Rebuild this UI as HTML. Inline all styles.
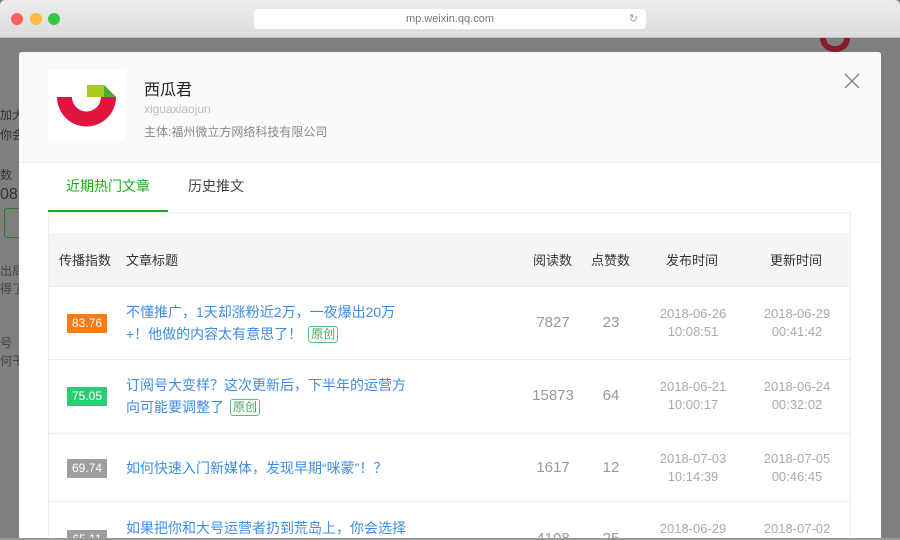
<!DOCTYPE html><html><head><meta charset="utf-8"><style>
*{margin:0;padding:0;box-sizing:border-box}
html{width:900px;height:540px;overflow:hidden}
body{width:900px;height:540px;overflow:hidden;background:#7f7f7f;font-family:"Liberation Sans","Noto Sans CJK SC",sans-serif;position:relative}
.chrome{position:absolute;left:0;top:0;width:900px;height:38px;background:linear-gradient(#ededed,#dcdcdc);border-bottom:1px solid #bdbdbd;border-radius:5px 5px 0 0}
.dot{position:absolute;top:13px;width:12px;height:12px;border-radius:50%}
.url{position:absolute;left:254px;top:9px;width:392px;height:20px;background:#fff;border-radius:4px;font-size:11px;color:#777;text-align:center;line-height:20px}
.modal{position:absolute;left:19px;top:52px;width:862px;height:486px;background:#fff;border-radius:3px 3px 0 0;overflow:hidden}
.head{height:111px;background:#fafafa;border-bottom:1px solid #eee;position:relative}
.abs{position:absolute}
.tabs{position:absolute;top:111px;left:0;width:862px;height:49px}
.table{position:absolute;left:29px;top:160px;width:803px;height:326px;border:1px solid #eee;border-bottom:none;overflow:hidden}
.th{position:absolute;top:20px;left:0;width:802px;height:53px;background:#f5f5f5;font-size:13px;color:#333}
.row{position:absolute;left:0;width:802px;border-top:1px solid #ececec}
.badge{position:absolute;left:18px;width:40px;height:19px;color:#fff;font-size:12px;line-height:19px;text-align:center;border-radius:1px}
.t{position:absolute;left:77px;width:284px;font-size:14px;color:#3c8de4;line-height:22px}
.yc{display:inline-block;border:1px solid #5ac26e;color:#4aa35b;font-size:12px;line-height:15px;padding:0 2px;border-radius:3px;margin-left:6px;vertical-align:1px}
.n{position:absolute;font-size:15px;color:#999;text-align:center;width:60px}
.d{position:absolute;font-size:13px;color:#aaa;text-align:center;width:100px;line-height:18px}
</style></head><body>
<div class="chrome">
<div class="dot" style="left:11px;background:#fc605c"></div>
<div class="dot" style="left:30px;background:#fdbc40"></div>
<div class="dot" style="left:48px;background:#34c84a"></div>
<div class="url">mp.weixin.qq.com<span style="position:absolute;right:8px;color:#999">↻</span></div>
</div>
<div class="abs" style="left:0;top:105px;font-size:12px;color:#333;line-height:20px">加大<br>你会<br><br>数<br><span style="font-size:16px">08</span></div>
<div class="abs" style="left:4px;top:208px;width:20px;height:30px;border:1px solid #2b7d2b;border-radius:3px"></div>
<div class="abs" style="left:0;top:262px;font-size:12px;color:#444;line-height:18px">出局<br>得了<br><br><br>号<br>何干</div>
<div class="abs" style="left:820px;top:38px;width:30px;height:14px;border:6px solid #8c1a2b;border-top:none;border-radius:0 0 15px 15px"></div>
<div class="modal">
<div class="head">
<div class="abs" style="left:29px;top:18px;width:77px;height:70px;background:#fff">
<svg width="77" height="70" viewBox="0 0 77 70"><path d="M9 27 H24 A14.5 14.5 0 0 0 53 27 H68 A29.5 29.5 0 0 1 9 27Z" fill="#e0153f"/><path d="M39 15 H56 L68 27 H39Z" fill="#a8cc1c"/><path d="M56 15 L68 27 H56Z" fill="#4cae3a"/></svg></div>
<div class="abs" style="left:125px;top:24px;font-size:16px;color:#222">西瓜君</div>
<div class="abs" style="left:125px;top:50px;font-size:12px;color:#bbb">xiguaxiaojun</div>
<div class="abs" style="left:125px;top:71px;font-size:12px;color:#888">主体:福州微立方网络科技有限公司</div>
<svg class="abs" style="left:825px;top:21px" width="16" height="16"><path d="M1 1L15 15M15 1L1 15" stroke="#888" stroke-width="1.5"/></svg>
</div>
<div class="tabs">
<div class="abs" style="left:29px;top:0;width:120px;height:49px;border-bottom:2px solid #1aad19;color:#1aad19;font-size:14px;text-align:center;line-height:46px">近期热门文章</div>
<div class="abs" style="left:169px;top:0;font-size:14px;color:#444;line-height:46px">历史推文</div>
</div>
<div class="table">
<div class="th">
<span class="abs" style="left:10px;top:17px">传播指数</span>
<span class="abs" style="left:77px;top:17px">文章标题</span>
<span class="abs" style="left:484px;top:17px">阅读数</span>
<span class="abs" style="left:542px;top:17px">点赞数</span>
<span class="abs" style="left:617px;top:17px">发布时间</span>
<span class="abs" style="left:721px;top:17px">更新时间</span>
</div>
<div class="row" style="top:73px;height:73px">
<div class="badge" style="top:27px;background:#ff7a0f">83.76</div>
<div class="t" style="top:14px">不懂推广，1天却涨粉近2万，一夜爆出20万+！他做的内容太有意思了！<span class="yc">原创</span></div>
<div class="n" style="left:474px;top:27px">7827</div><div class="n" style="left:532px;top:27px">23</div>
<div class="d" style="left:594px;top:18px">2018-06-26<br>10:08:51</div><div class="d" style="left:698px;top:18px">2018-06-29<br>00:41:42</div>
</div>
<div class="row" style="top:146px;height:74px">
<div class="badge" style="top:27px;background:#2ecc71">75.05</div>
<div class="t" style="top:14px">订阅号大变样？这次更新后，下半年的运营方向可能要调整了<span class="yc">原创</span></div>
<div class="n" style="left:474px;top:27px">15873</div><div class="n" style="left:532px;top:27px">64</div>
<div class="d" style="left:594px;top:18px">2018-06-21<br>10:00:17</div><div class="d" style="left:698px;top:18px">2018-06-24<br>00:32:02</div>
</div>
<div class="row" style="top:220px;height:68px">
<div class="badge" style="top:25px;background:#9e9e9e">69.74</div>
<div class="t" style="top:23px">如何快速入门新媒体，发现早期“咪蒙”！？</div>
<div class="n" style="left:474px;top:25px">1617</div><div class="n" style="left:532px;top:25px">12</div>
<div class="d" style="left:594px;top:16px">2018-07-03<br>10:14:39</div><div class="d" style="left:698px;top:16px">2018-07-05<br>00:46:45</div>
</div>
<div class="row" style="top:288px;height:38px">
<div class="badge" style="top:28px;background:#9e9e9e">65.11</div>
<div class="t" style="top:15px">如果把你和大号运营者扔到荒岛上，你会选择</div>
<div class="n" style="left:474px;top:28px">4108</div><div class="n" style="left:532px;top:28px">25</div>
<div class="d" style="left:594px;top:18px">2018-06-29</div><div class="d" style="left:698px;top:18px">2018-07-02</div>
</div>
</div>
</div>
<div class="abs" style="left:0;top:538px;width:900px;height:2px;background:#999"></div>
</body></html>
